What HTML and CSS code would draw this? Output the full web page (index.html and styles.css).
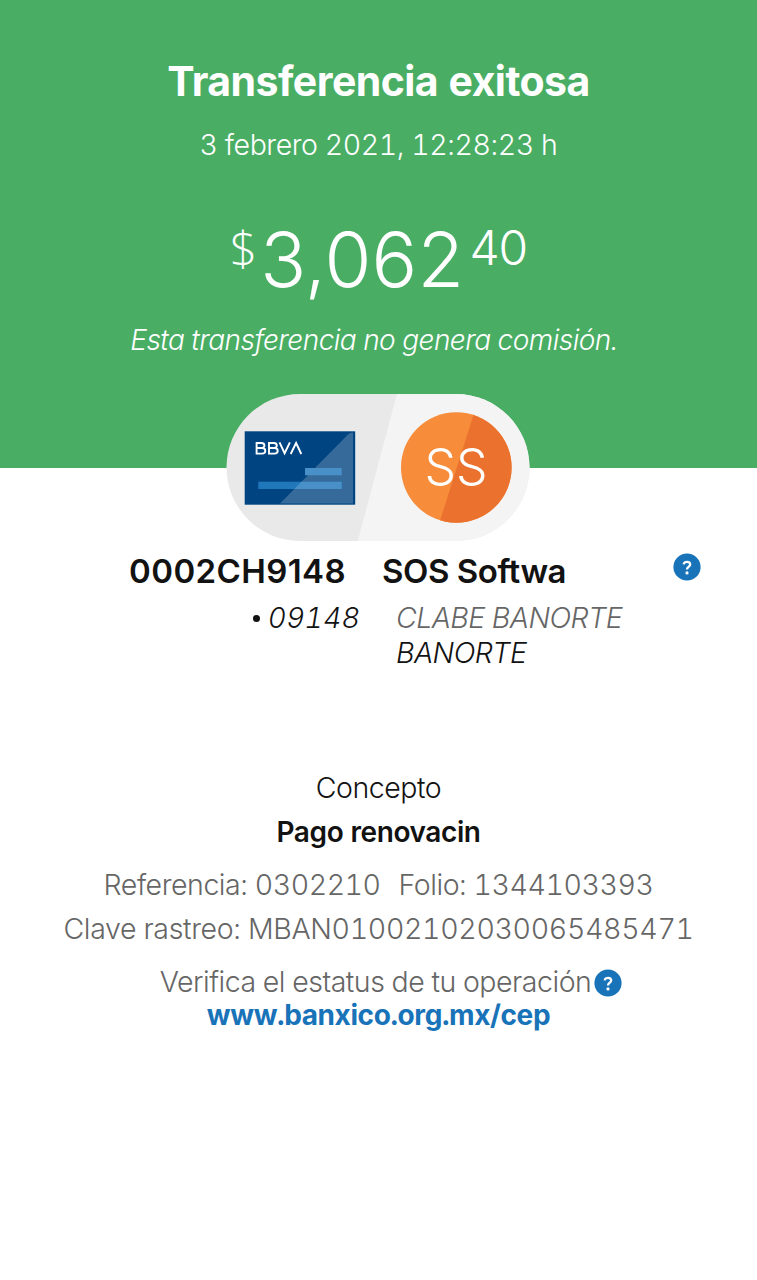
FILE: index.html
```html
<!DOCTYPE html>
<html lang="es">
<head>
<meta charset="utf-8">
<title>Transferencia exitosa</title>
<link rel="stylesheet" href="styles.css">
</head>
<body>
<header class="hero">
  <h1 class="title">Transferencia exitosa</h1>
  <p class="date">3 febrero 2021, 12:28:23 h</p>
  <div class="amount"><span class="currency">$</span><span class="whole">3,062</span><span class="cents">40</span></div>
  <p class="fee">Esta transferencia no genera comisión.</p>
</header>
<main>
  <div class="pill">
    <svg width="304" height="148" viewBox="0 0 304 148">
      <defs>
        <clipPath id="pill-shape"><rect x=".5" y="0" width="303" height="147" rx="73.5"/></clipPath>
        <clipPath id="avatar-shape"><circle cx="230.3" cy="73.5" r="55.3"/></clipPath>
      </defs>
      <g clip-path="url(#pill-shape)">
        <rect width="304" height="148" fill="#e9e9e9"/>
        <path d="M171 0H304V148H131.500Z" fill="#f4f4f4"/>
      </g>
      <rect x="18.700" y="37.300" width="110.500" height="73.400" fill="#004481"/>
      <path d="M127 38.500V109.500H54L122 40.500Q124 38.500 127 38.500Z" fill="#366a9b"/>
      <rect x="32.300" y="87.700" width="83.400" height="7.300" fill="#2077b9"/>
      <rect x="79" y="74" width="36.700" height="7.300" fill="#4a90c8"/>
      <path d="M75.500 87.700H115.700V95H68.300Z" fill="#4a90c8"/>
      <g fill="none" stroke="#fff" stroke-width="1.900">
        <path d="M30.600 49V59.600H36Q39.300 59.600 39.300 56.800T36 54H30.600H35.400Q38.400 54 38.400 51.500T35.400 49Z"/>
        <path d="M43 49V59.600H48.400Q51.700 59.600 51.700 56.800T48.400 54H43H47.800Q50.800 54 50.800 51.500T47.800 49Z"/>
        <path d="M53.500 48.300L58.600 59.200L63.900 48.300M64.700 60L70.100 49L75.300 60"/>
      </g>
      <g clip-path="url(#avatar-shape)">
        <rect x="174" y="17" width="113" height="113" fill="#f78c3b"/>
        <path d="M250 13L212 133H290V13Z" fill="#eb722e"/>
      </g>
      <text class="initials" x="230" y="90.500" text-anchor="middle">SS</text>
    </svg>
  </div>
  <section class="parties">
    <div class="from">
      <div class="name code">0002CH9148</div>
      <div class="account"><span class="dot"></span><span>09148</span></div>
    </div>
    <div class="to">
      <div class="name">SOS Softwa</div>
      <div class="detail muted">CLABE BANORTE</div>
      <div class="detail">BANORTE</div>
    </div>
    <svg class="help" viewBox="0 0 28 28"><circle cx="14" cy="14" r="13.600" fill="#1973b8"/><path d="M10.700 11.300Q11 8.800 14.100 8.800T17.200 11.500C17.200 13.600 14 13.700 14 16.600" fill="none" stroke="#fff" stroke-width="2.300"/><circle cx="14" cy="19.900" r="1.600" fill="#fff"/></svg>
  </section>
  <section class="info">
    <p class="concept">Concepto</p>
    <p class="concept-value">Pago renovacin</p>
    <p class="refs"><span>Referencia: 0302210</span><span>Folio: 1344103393</span></p>
    <p class="tracking">Clave rastreo: MBAN01002102030065485471</p>
    <p class="verify"><span>Verifica el estatus de tu operación</span><svg class="help" viewBox="0 0 28 28"><circle cx="14" cy="14" r="13.600" fill="#1973b8"/><path d="M10.700 11.300Q11 8.800 14.100 8.800T17.200 11.500C17.200 13.600 14 13.700 14 16.600" fill="none" stroke="#fff" stroke-width="2.300"/><circle cx="14" cy="19.900" r="1.600" fill="#fff"/></svg></p>
    <a class="link">www.banxico.org.mx/cep</a>
  </section>
</main>
</body>
</html>
```
FILE: styles.css
```css
* { box-sizing: border-box; }
body {
  margin: 0;
  min-height: 1280px;
  background: #fff;
  color: #121212;
  font-family: Inter, sans-serif;
  font-size: 28.5px;
  font-weight: 300;
  font-variant-numeric: tabular-nums;
  white-space: nowrap;
}
p, h1 { margin: 0; }
.hero {
  height: 467.5px;
  padding-top: 56px;
  background: #49ae64;
  color: #fff;
  text-align: center;
}
.title { font-size: 41px; line-height: 50px; font-weight: 700; letter-spacing: -0.55px; }
.date { height: 40px; margin-top: 19px; line-height: 40px; letter-spacing: -0.43px; }
.amount {
  display: flex;
  justify-content: center;
  align-items: flex-start;
  height: 80px;
  margin-top: 54px;
  font-variant-numeric: normal;
}
.whole { margin-left: 3px; font-size: 76px; line-height: 80px; letter-spacing: 0.2px; }
.currency { font-size: 48px; line-height: 58px; font-family: "Open Sans", sans-serif; }
.cents { margin-left: 5px; font-size: 48px; line-height: 58px; letter-spacing: -1px; }
.fee { margin-top: 21px; margin-right: 9px; font-size: 28px; line-height: 40px; font-style: italic; letter-spacing: -0.53px; }

.pill { display: flex; justify-content: center; height: 148px; margin-top: -73.5px; padding-right: 1px; }
.initials { fill: #fff; font: 300 50px Inter, sans-serif; }

.parties {
  display: grid;
  grid-template-columns: 359px 1fr 28px;
  padding-right: 56px;
  height: 134px;
  margin-top: 9px;
}
.from { display: flex; flex-direction: column; align-items: flex-end; }
.name { font-size: 33px; line-height: 40px; font-weight: 600; letter-spacing: -0.45px; font-variant-numeric: normal; }
.name.code { margin-right: 13px; letter-spacing: 0.4px; }
.account { display: flex; align-items: center; gap: 8px; margin-top: 7px; margin-right: -1px; line-height: 40px; font-style: italic; }
.dot { width: 7px; height: 7px; border-radius: 50%; background: #121212; }
.to { padding-left: 23px; }
.detail { margin-left: 14px; line-height: 35px; font-style: italic; letter-spacing: -0.55px; }
.to .muted { margin-top: 9px; color: #666; }
.help { width: 28px; height: 28px; margin-top: 2px; flex: none; }

.info { display: flex; flex-direction: column; align-items: center; margin-top: 83px; color: #666; }
.info p { height: 40px; line-height: 40px; }
.info .concept { color: #121212; letter-spacing: -0.45px; }
.info .concept-value { margin-top: 4px; font-size: 28px; font-weight: 600; color: #121212; letter-spacing: -0.4px; }
.info .refs { display: flex; gap: 18px; margin-top: 13px; letter-spacing: -0.45px; }
.info .tracking { margin-top: 4px; letter-spacing: -0.34px; }
.info .verify { display: flex; align-items: center; gap: 3px; margin-top: 13px; margin-left: 25px; letter-spacing: -0.48px; }
.verify .help { margin-top: 1px; }
.link { margin-top: -6px; font-size: 28px; line-height: 38px; font-weight: 700; color: #1973b8; letter-spacing: -0.4px; }
```
